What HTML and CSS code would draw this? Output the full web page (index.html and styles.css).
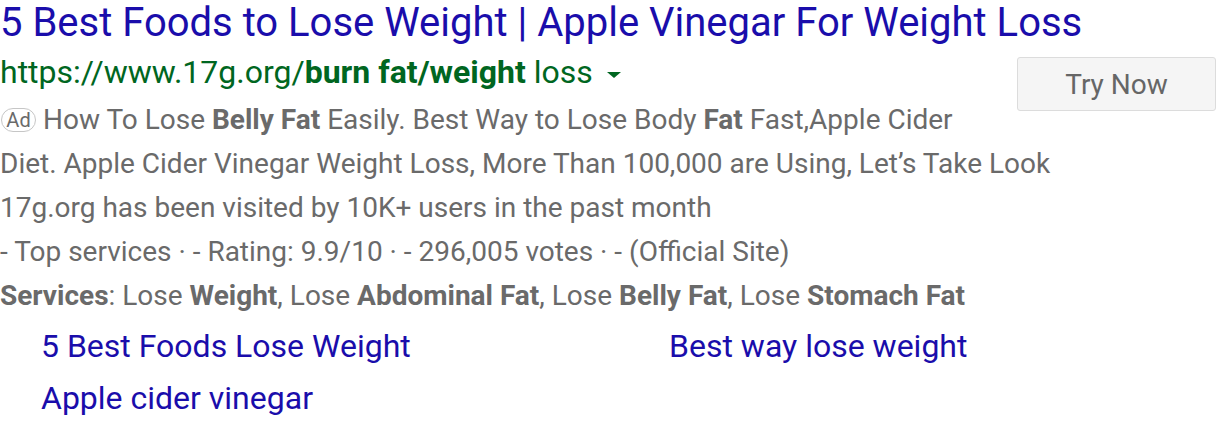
FILE: index.html
```html
<!DOCTYPE html>
<html>
<head>
<meta charset="utf-8">
<link rel="stylesheet" href="styles.css">
</head>
<body>
<div class="ad">
  <a class="title" href="#">5 Best Foods to Lose Weight | Apple Vinegar For Weight Loss</a>
  <button class="cta">Try Now</button>
  <div class="url">https://www.17g.org/<b>burn fat/weight</b> loss <span class="caret"></span></div>
  <div class="desc">
    <div class="line"><span class="badge">Ad</span>How To Lose <b>Belly Fat</b> Easily. Best Way to Lose Body <b>Fat</b> Fast,Apple Cider</div>
    <div class="line">Diet. Apple Cider Vinegar Weight Loss, More Than 100,000 are Using, Let’s Take Look</div>
    <div class="line">17g.org has been visited by 10K+ users in the past month</div>
    <div class="line">- Top services · - Rating: 9.9/10 · - 296,005 votes · - (Official Site)</div>
    <div class="line"><b>Services</b>: Lose <b>Weight</b>, Lose <b>Abdominal Fat</b>, Lose <b>Belly Fat</b>, Lose <b>Stomach Fat</b></div>
  </div>
  <div class="sitelinks">
    <a href="#">5 Best Foods Lose Weight</a>
    <a href="#">Best way lose weight</a>
    <a href="#">Apple cider vinegar</a>
  </div>
</div>
</body>
</html>
```
FILE: styles.css
```css
html, body {
  margin: 0;
  padding: 0;
  background: #fff;
}
body {
  font-family: Roboto, "Liberation Sans", Arial, sans-serif;
  width: 1216px;
}
.title {
  display: block;
  color: #1a0dab;
  text-decoration: none;
  font-size: 40px;
  line-height: 46px;
  white-space: nowrap;
}
.cta {
  float: right;
  width: 199px;
  height: 54px;
  margin: 11px 0 0 0;
  background: #f5f5f5;
  border: 1px solid #dcdcdc;
  border-radius: 3px;
  color: #666;
  font-family: Roboto, "Liberation Sans", Arial, sans-serif;
  font-size: 28px;
  padding: 0;
}
.url {
  color: #006621;
  font-size: 32px;
  line-height: 52px;
  white-space: nowrap;
}
.url b {
  font-weight: 700;
}
.caret {
  display: inline-block;
  width: 0;
  height: 0;
  border-left: 7px solid transparent;
  border-right: 7px solid transparent;
  border-top: 6px solid #006621;
  vertical-align: middle;
  margin-left: 6px;
}
.desc {
  color: #6a6a6a;
  font-size: 28px;
}
.line {
  line-height: 44px;
  white-space: nowrap;
}
.line b {
  font-weight: 700;
}
.badge {
  display: inline-block;
  box-sizing: border-box;
  width: 35px;
  height: 24px;
  text-align: center;
  font-size: 20px;
  line-height: 22px;
  border: 1px solid #c6c6c6;
  border-radius: 12px;
  color: #6a6a6a;
  vertical-align: 2px;
  margin: 0 7px 0 1px;
}
.sitelinks {
  display: grid;
  grid-template-columns: 628px auto;
  padding: 2px 0 0 41px;
  font-size: 32px;
  line-height: 52px;
}
.sitelinks a {
  color: #1a0dab;
  text-decoration: none;
  white-space: nowrap;
}
```
